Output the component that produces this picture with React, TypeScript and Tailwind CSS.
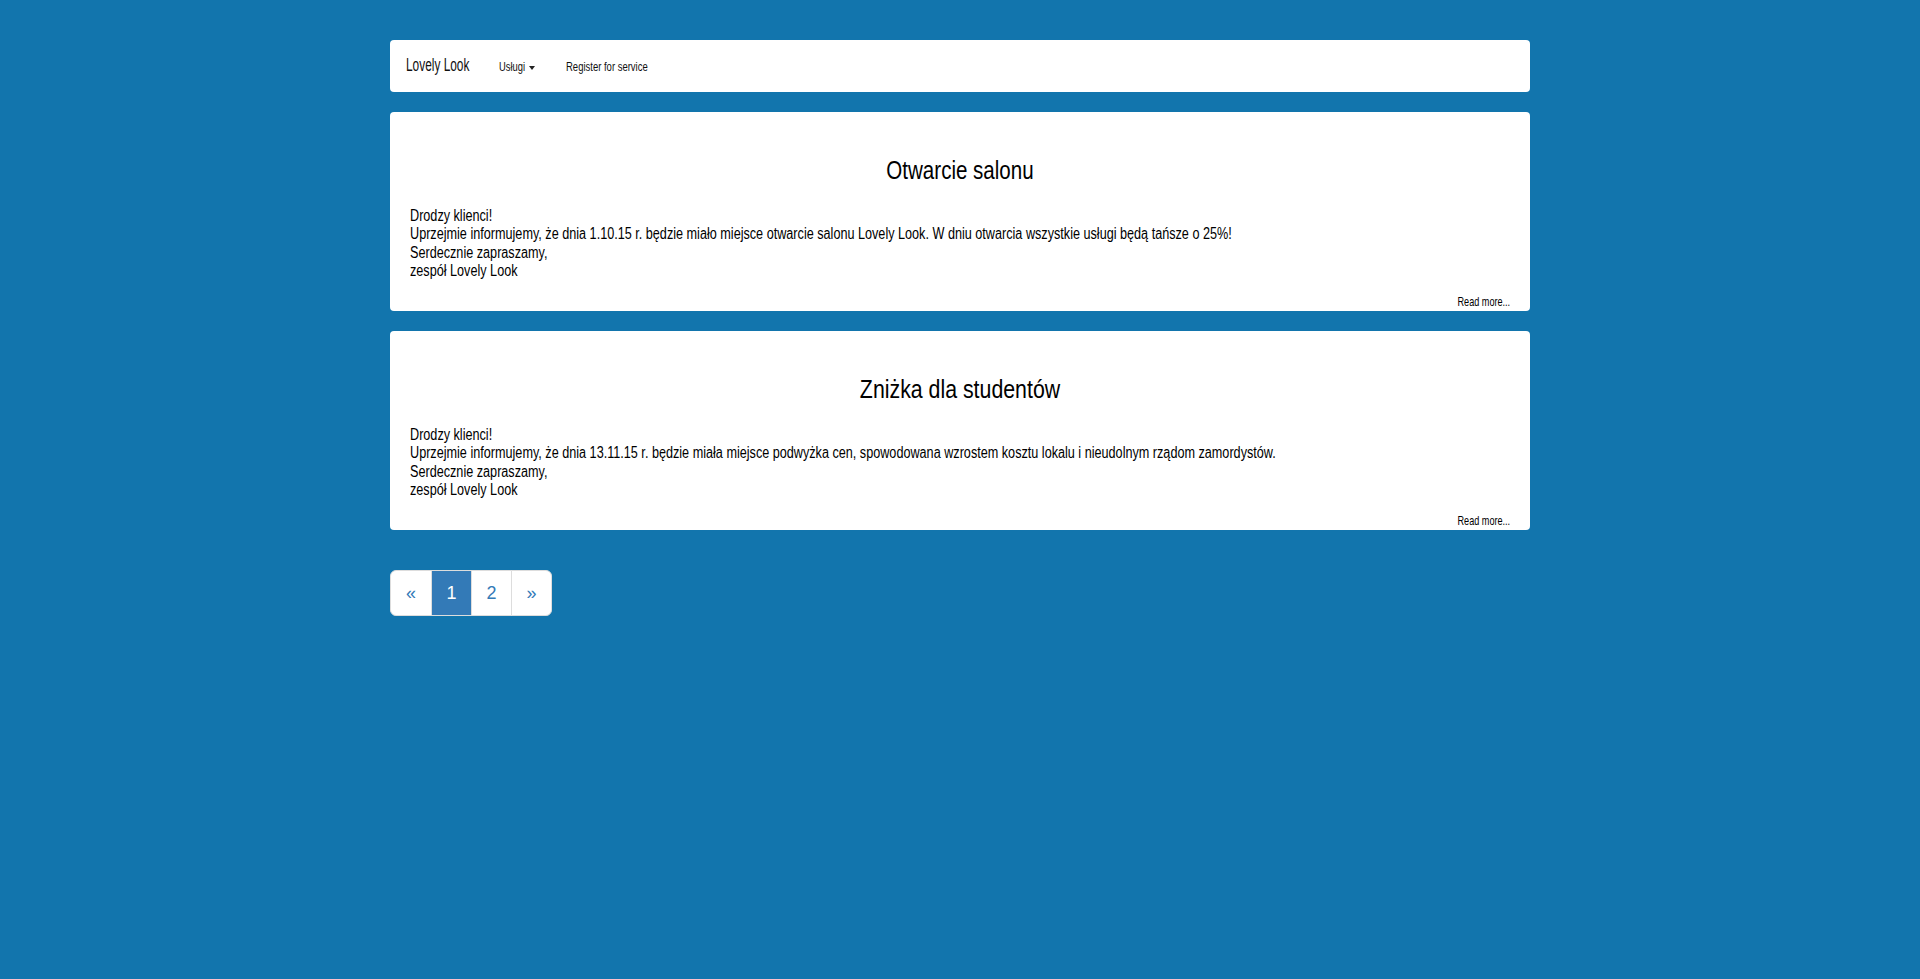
const sans = "font-['Liberation_Sans',Arial,sans-serif]";

interface Post {
  title: string;
  body: string;
  titleScale: string;
}

const posts: Post[] = [
  {
    title: 'Otwarcie salonu',
    body: 'Uprzejmie informujemy, że dnia 1.10.15 r. będzie miało miejsce otwarcie salonu Lovely Look. W dniu otwarcia wszystkie usługi będą tańsze o 25%!',
    titleScale: 'scale-x-[0.79]'
  },
  {
    title: 'Zniżka dla studentów',
    body: 'Uprzejmie informujemy, że dnia 13.11.15 r. będzie miała miejsce podwyżka cen, spowodowana wzrostem kosztu lokalu i nieudolnym rządom zamordystów.',
    titleScale: 'scale-x-[0.82]'
  }
];

// the original font is a narrow display face, so text is squeezed with scale-x
function Navbar() {
  return (
    <nav className="h-[52px] bg-white rounded-[4px] flex items-center pl-4 text-[#111]">
      <div className="w-[93px]">
        <span className="inline-block origin-left scale-x-[0.66] text-[18px] leading-none whitespace-nowrap">Lovely Look</span>
      </div>
      <div className="w-[67px] flex items-center">
        <span className="inline-block w-[30px] origin-left scale-x-[0.72] text-[13px] leading-none">Usługi</span>
        <span className="w-0 h-0 border-x-[3px] border-x-transparent border-t-[4px] border-t-[#222] mt-[3px]" />
      </div>
      <span className="inline-block origin-left scale-x-[0.73] text-[13px] leading-none whitespace-nowrap">Register for service</span>
    </nav>
  );
}

function PostCard({ post }: { post: Post }) {
  return (
    <div className="mt-5 bg-white rounded-[4px] px-5 pt-[43px] h-[199px] flex flex-col text-black">
      <h2 className={`text-center text-[26px] leading-[30px] whitespace-nowrap ${post.titleScale}`}>{post.title}</h2>
      <div className="mt-[22px] origin-left scale-x-[0.79] text-[16px] leading-[18.33px] whitespace-nowrap">
        Drodzy klienci!
        <br />
        {post.body}
        <br />
        Serdecznie zapraszamy,
        <br />
        zespół Lovely Look
      </div>
      <div className="mt-auto self-end origin-right scale-x-[0.7] text-[13px] leading-[16px] mb-px whitespace-nowrap">Read more...</div>
    </div>
  );
}

function Pagination() {
  const base = 'h-[46px] flex items-center justify-center text-[18px] border border-[#ddd]';
  return (
    <div className="mt-10 flex">
      <span className={`${base} w-[42px] bg-white text-[#337ab7] rounded-l-[6px]`}>«</span>
      <span className={`${base} w-[41px] -ml-px bg-[#337ab7] border-[#337ab7] text-white`}>1</span>
      <span className={`${base} w-[41px] -ml-px bg-white text-[#337ab7]`}>2</span>
      <span className={`${base} w-[41px] -ml-px bg-white text-[#337ab7] rounded-r-[6px]`}>»</span>
    </div>
  );
}

export default function App() {
  return (
    <div className={`min-h-[979px] bg-[#1275ad] ${sans}`}>
      <div className="w-[1140px] mx-auto pt-10">
        <Navbar />
        {posts.map((p) => (
          <PostCard key={p.title} post={p} />
        ))}
        <Pagination />
      </div>
    </div>
  );
}
